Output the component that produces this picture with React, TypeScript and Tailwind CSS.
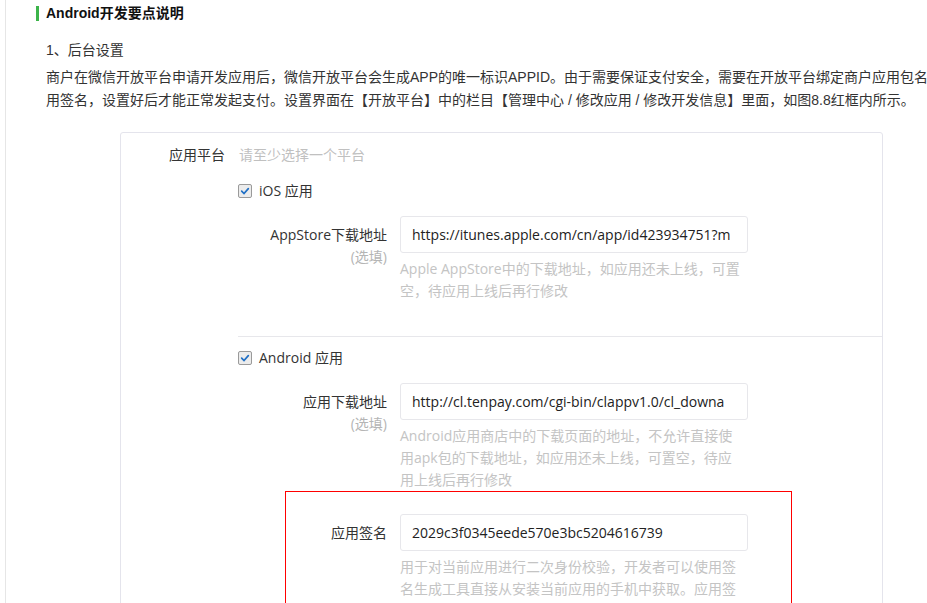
import React from "react";

const formFont = "font-['Open_Sans','Noto_Sans_CJK_SC',sans-serif]";

function Check({ label }: { label: string }) {
  return (
    <div className="flex items-center leading-[22px] text-[14px] text-[#333]">
      <span className="flex h-[14px] w-[14px] items-center justify-center rounded-[2px] border border-[#9a9a9a] bg-[#ececec]">
        <svg viewBox="0 0 12 12" className="h-[10px] w-[10px]">
          <path d="M2 6.2 L4.8 9 L10 3.2" fill="none" stroke="#1f6fc5" strokeWidth="2" strokeLinecap="round" />
        </svg>
      </span>
      <span className="ml-[7px]">{label}</span>
    </div>
  );
}

function Field({
  label,
  optional,
  value,
  help,
  labelWidth,
}: {
  label: string;
  optional?: boolean;
  value: string;
  help: string[];
  labelWidth: string;
}) {
  return (
    <div className="flex">
      <div className={`${labelWidth} shrink-0 pt-[8px] text-right text-[14px] leading-[22px] text-[#333]`}>
        <div>{label}</div>
        {optional && <div className="text-[#b5b5b5]">(选填)</div>}
      </div>
      <div className="ml-[13px] w-[348px] shrink-0">
        <div className="h-[37px] overflow-hidden whitespace-nowrap rounded-[3px] border border-[#e7e7eb] pl-[11px] text-[14px] leading-[35px] text-[#222]">
          {value}
        </div>
        <div className="mt-[5px] text-[14px] leading-[22px] text-[#c4c4c4]">
          {help.map((h) => (
            <div key={h} className="whitespace-nowrap">{h}</div>
          ))}
        </div>
      </div>
    </div>
  );
}

export default function App() {
  return (
    <div className="relative flex h-[603px] w-[927px] overflow-hidden bg-white">
      <div className="w-[5px] shrink-0" />
      <div className="flex-1 border-l border-[#e6e6e6]">
        <div className="font-['Liberation_Sans','Noto_Sans_CJK_SC',sans-serif] text-[14px] text-[#333]">
          <div className="mt-[4px] flex h-[18px] items-center">
            <span className="ml-[30px] h-[15px] w-[3px] bg-[#3cb44a]" />
            <span className="ml-[7px] font-bold text-[#111]">Android开发要点说明</span>
          </div>
          <div className="ml-[40px] mt-[17px] leading-[22px]">1、后台设置</div>
          <div className="ml-[40px] mt-[5px] whitespace-nowrap leading-[23px]">
            <div>商户在微信开放平台申请开发应用后，微信开放平台会生成APP的唯一标识APPID。由于需要保证支付安全，需要在开放平台绑定商户应用包名</div>
            <div>用签名，设置好后才能正常发起支付。设置界面在【开放平台】中的栏目【管理中心 / 修改应用 / 修改开发信息】里面，如图8.8红框内所示。</div>
          </div>
        </div>

        <div className={`${formFont} ml-[114px] mt-[20px] w-[763px] rounded-t-[3px] border border-[#e4e4ec] pb-[40px]`}>
          <div className="flex pt-[11px] text-[14px] leading-[22px]">
            <div className="w-[104px] text-right text-[#333]">应用平台</div>
            <div className="ml-[14px] text-[#c0c0c0]">请至少选择一个平台</div>
          </div>
          <div className="ml-[117px]">
            <div className="mt-[14px]">
              <Check label="iOS 应用" />
            </div>
            <div className="mt-[14px]">
              <Field
                label="AppStore下载地址"
                optional
                labelWidth="w-[149px]"
                value="https://itunes.apple.com/cn/app/id423934751?m"
                help={["Apple AppStore中的下载地址，如应用还未上线，可置", "空，待应用上线后再行修改"]}
              />
            </div>
            <div className="mt-[34px] border-t border-[#e7e7eb]" />
            <div className="mt-[10px]">
              <Check label="Android 应用" />
            </div>
            <div className="mt-[14px]">
              <Field
                label="应用下载地址"
                optional
                labelWidth="w-[149px]"
                value="http://cl.tenpay.com/cgi-bin/clappv1.0/cl_downa"
                help={[
                  "Android应用商店中的下载页面的地址，不允许直接使",
                  "用apk包的下载地址，如应用还未上线，可置空，待应",
                  "用上线后再行修改",
                ]}
              />
            </div>
            <div className="ml-[47px] h-[140px] w-[507px] border border-[#ff0000] pt-[22px]">
              <Field
                label="应用签名"
                labelWidth="w-[101px]"
                value="2029c3f0345eede570e3bc5204616739"
                help={[
                  "用于对当前应用进行二次身份校验，开发者可以使用签",
                  "名生成工具直接从安装当前应用的手机中获取。应用签",
                ]}
              />
            </div>
          </div>
        </div>
      </div>
    </div>
  );
}
